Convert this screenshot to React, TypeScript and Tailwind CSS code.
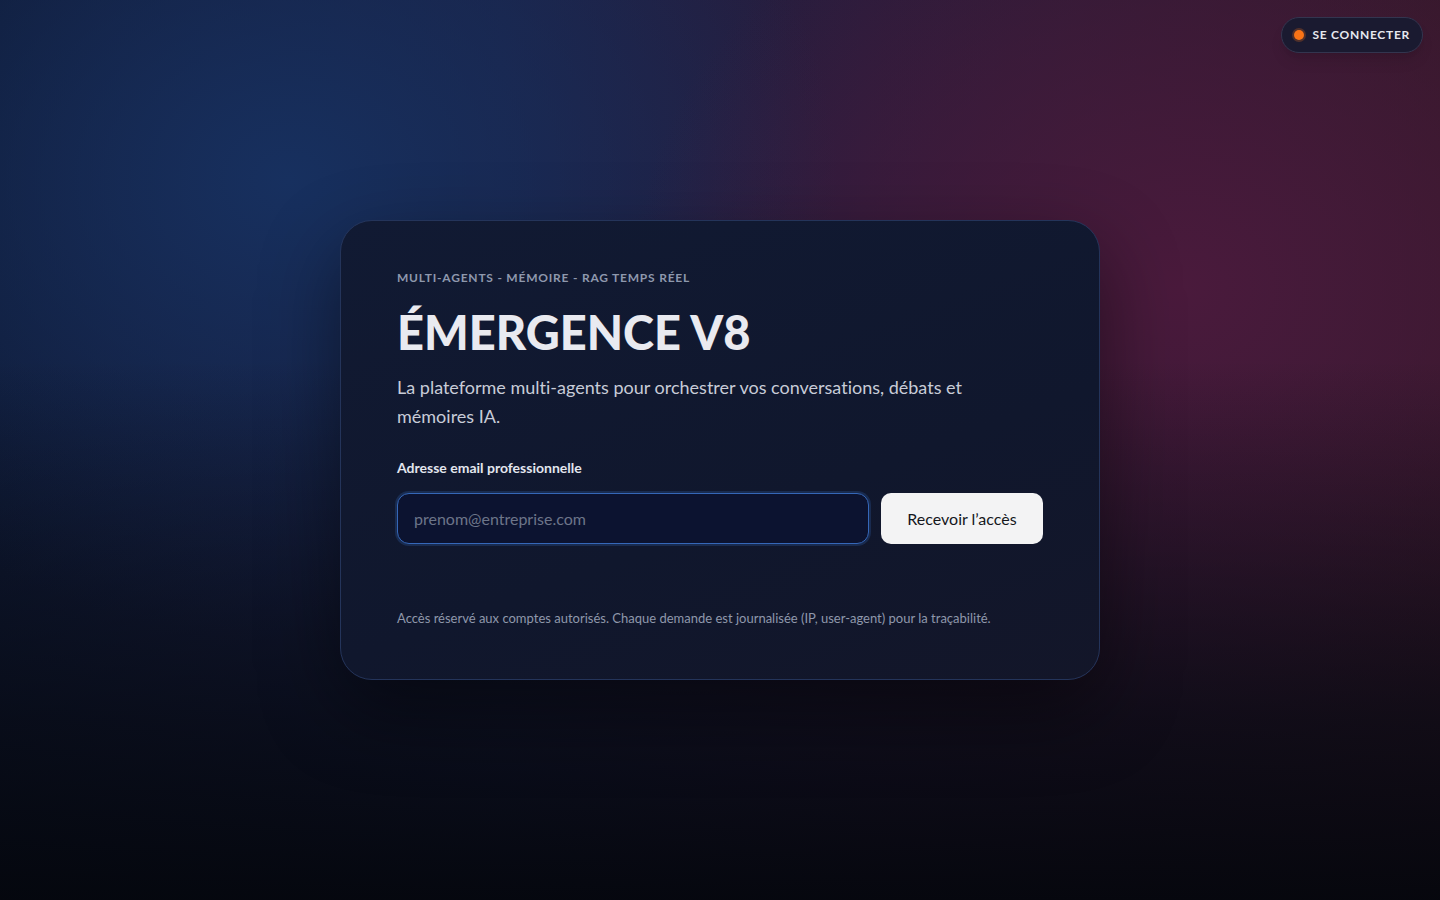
export default function App() {
  return (
    <div
      className="relative min-h-screen w-full overflow-hidden bg-[linear-gradient(90deg,#0f1a36_0%,#1b2145_35%,#2a1c3c_60%,#331829_100%)] flex items-center justify-center [font-variant-ligatures:none]"
      style={{ fontFamily: 'Lato, "Noto Sans", sans-serif' }}
    >
      <div className="pointer-events-none absolute inset-0 bg-[radial-gradient(ellipse_45%_60%_at_20%_20%,#17305f_0%,rgba(23,48,95,0.4)_50%,transparent_85%)]" />
      <div className="pointer-events-none absolute inset-0 bg-[radial-gradient(ellipse_45%_60%_at_82%_32%,#4a1a3c_0%,rgba(74,26,60,0.45)_50%,transparent_85%)]" />
      <div className="pointer-events-none absolute inset-0 bg-[linear-gradient(180deg,transparent_0%,transparent_40%,rgba(6,8,16,0.75)_80%,rgba(4,6,12,0.95)_100%)]" />

      <button className="absolute right-[17px] top-[17px] flex h-[36px] items-center gap-[9px] rounded-full border border-[#33354f] bg-[#1a1a30] pl-[12px] pr-[12px] text-[12px] font-bold tracking-[0.06em] text-[#e6e8ef] shadow-lg">
        <span className="h-[10px] w-[10px] rounded-full bg-[#f97316] ring-2 ring-[#f97316]/25" />
        SE CONNECTER
      </button>

      <div className="relative w-[760px] rounded-[32px] border border-[#24345a] bg-[linear-gradient(160deg,#111a33_0%,#10172d_60%,#131629_100%)] px-[56px] pb-[50px] pt-[48px] shadow-[0_30px_80px_rgba(0,0,0,0.45)]">
        <p className="text-[12px] font-bold uppercase tracking-[0.065em] text-[#8e98ad]">
          Multi-agents - Mémoire - RAG temps réel
        </p>
        <h1 className="mt-[20px] text-[47px] font-black leading-[1.1] text-[#e9eaf0]">
          ÉMERGENCE V8
        </h1>
        <p className="mt-[14px] text-[18px] leading-[29px] text-[#c8ccd8]">
          La plateforme multi-agents pour orchestrer vos conversations, débats et mémoires IA.
        </p>

        <label className="mt-[26px] block text-[14px] font-bold text-[#e3e6ee]">
          Adresse email professionnelle
        </label>
        <div className="mt-[15px] flex gap-[12px]">
          <input
            type="email"
            placeholder="prenom@entreprise.com"
            className="h-[51px] flex-1 rounded-[12px] border border-[#3567b8] bg-[#0c1330] px-[16px] text-[16px] text-[#e3e6ee] outline-none ring-2 ring-[#3567b8]/25 placeholder:text-[#6c7589]"
          />
          <button className="h-[51px] w-[162px] rounded-[10px] bg-[#f3f3f4] text-[16px] text-[#15171c]">
            Recevoir l’accès
          </button>
        </div>

        <p className="mt-[65px] text-[13px] text-[#8f98ab]">
          Accès réservé aux comptes autorisés. Chaque demande est journalisée (IP, user-agent) pour la traçabilité.
        </p>
      </div>
    </div>
  );
}
